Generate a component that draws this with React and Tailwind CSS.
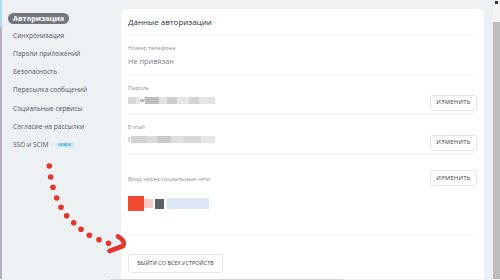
import React from 'react';

const navItems = [
  'Синхронизация',
  'Пароли приложений',
  'Безопасность',
  'Пересылка сообщений',
  'Социальные сервисы',
  'Согласие на рассылки',
];

const ChangeButton = () => (
  <button className="h-[16px] w-[47px] rounded-[3px] border border-[#e3e5e8] bg-white text-[6px] tracking-[0.2px] text-[#3a3f47]">
    ИЗМЕНИТЬ
  </button>
);

// blurred placeholder for hidden values
const Blur = ({ blocks }) => (
  <div className="flex items-center">
    {blocks.map(([w, c], i) => (
      <div key={i} className="h-[7px] blur-[0.6px]" style={{ width: w, background: c }} />
    ))}
  </div>
);

const Label = ({ children }) => (
  <div className="text-[5.8px] leading-[8px] text-[#8a8f96]">{children}</div>
);

const Arrow = () => (
  <svg className="pointer-events-none absolute left-0 top-0" width="500" height="280">
    {[
      [49.3, 166], [50.7, 177], [53, 187.3], [56.7, 198], [61, 207.3], [66.7, 215.7],
      [73.7, 222.7], [81, 229.3], [89.3, 235.3], [99, 239.7], [108.5, 243.3],
    ].map(([cx, cy], i) => (
      <circle key={i} cx={cx} cy={cy} r="2.8" fill="#e2352c" />
    ))}
    <path d="M118 236.5 Q126 241 123 246 L109.5 251" fill="none" stroke="#e2352c" strokeWidth="4.6" strokeLinecap="round" strokeLinejoin="round" />
  </svg>
);

export default function App() {
  return (
    <div className="relative h-[280px] w-[500px] overflow-hidden bg-[#eef1f4] font-['Open_Sans',sans-serif]">
      <div className="flex h-[279px]">
        {/* left edge */}
        <div className="flex w-[2px] flex-col">
          <div className="h-[27px] bg-[#a9dcef]" />
          <div className="flex-1 bg-[#b4b0bd]" />
        </div>

        {/* sidebar */}
        <div className="flex w-[119px] flex-col pl-[6px] pt-[13px]">
          <div className="flex h-[11px] w-fit items-center rounded-full bg-[#737780] px-[5px] text-[7.3px] font-bold leading-none text-white">
            Авторизация
          </div>
          <div className="mt-[3px] flex flex-col">
            {navItems.map((t) => (
              <div key={t} className="flex h-[18.2px] items-center pl-[5px] text-[6.6px] leading-none text-[#4f545c]">
                {t}
              </div>
            ))}
            <div className="flex h-[18.2px] items-center pl-[5px] text-[6.6px] leading-none text-[#4f545c]">
              SSO и SCIM
              <span className="ml-[6px] flex h-[5px] w-[20px] items-center justify-center rounded-full bg-[#d3eef9] text-[3.5px] font-bold text-[#3aa6d6]">
                НОВОК
              </span>
            </div>
          </div>
        </div>

        {/* card */}
        <div className="mt-[9px] w-[363px] rounded-t-[6px] bg-white px-[7px]">
          <div className="flex h-[27px] items-center border-b border-[#f1f2f4] text-[8px] text-[#2b2f36]">
            Данные авторизации
          </div>

          <div className="h-[40px] border-b border-[#f1f2f4] pt-[8px]">
            <Label>Номер телефона</Label>
            <div className="mt-[4px] text-[7.4px] leading-[10px] text-[#7b8087]">Не привязан</div>
          </div>

          <div className="flex h-[39px] items-start border-b border-[#f1f2f4] pt-[8px]">
            <div className="flex-1">
              <Label>Пароль</Label>
              <div className="mt-[4.5px] flex items-center">
                <Blur blocks={[[8, '#d8d8d8'], [4, '#e8e8e8']]} />
                <span className="text-[6px] leading-[7px] text-[#555]">w</span>
                <Blur blocks={[[14, '#bdbdbd'], [8, '#e2e2e2'], [10, '#cfcfcf'], [12, '#e6e6e6'], [10, '#d4d4d4'], [16, '#e4e4e4']]} />
              </div>
            </div>
            <div className="pt-[2px]"><ChangeButton /></div>
          </div>

          <div className="flex h-[40px] items-start border-b border-[#f1f2f4] pt-[8px]">
            <div className="flex-1">
              <Label>E-mail</Label>
              <div className="mt-[4.5px] flex items-center">
                <span className="mr-[1px] text-[6px] leading-[7px] text-[#555]">)</span>
                <Blur blocks={[[16, '#d2d2d2'], [10, '#dcdcdc'], [14, '#cacaca'], [12, '#e0e0e0'], [18, '#d8d8d8'], [14, '#e6e6e6']]} />
              </div>
            </div>
            <div className="pt-[3px]"><ChangeButton /></div>
          </div>

          <div className="flex h-[81px] items-start border-b border-[#f1f2f4] pt-[15px]">
            <div className="flex-1 pt-[5px]">
              <Label>Вход через социальные сети</Label>
              <div className="mt-[13px] flex items-center">
                <div className="h-[15px] w-[16px] bg-[#f04a35] blur-[0.6px]" />
                <div className="h-[9px] w-[9px] bg-[#f7c9c2] blur-[0.6px]" />
                <div className="ml-[2px] h-[10px] w-[9px] bg-[#5a5f68] blur-[0.6px]" />
                <div className="ml-[3px] h-[11px] w-[42px] bg-[#dce8f6] blur-[0.6px]" />
              </div>
            </div>
            <ChangeButton />
          </div>

          <div className="pt-[11px]">
            <button className="h-[19px] w-[95px] rounded-[3px] border border-[#e3e5e8] bg-white text-[5.5px] text-[#3a3f47]">
              ВЫЙТИ СО ВСЕХ УСТРОЙСТВ
            </button>
          </div>
        </div>

        {/* scrollbar */}
        <div className="ml-[9px] flex w-[7px] flex-col">
          <div className="relative h-[22px] bg-[#f3f4f6]">
            <div className="absolute left-[2px] top-[1px] h-[3px] w-[3px] bg-[#333]" />
          </div>
          <div className="flex-1 bg-[#bdbdbd]" />
        </div>
      </div>
      <div className="ml-[110px] h-[1px] w-[233px] bg-[#d0d2d5]" />
      <Arrow />
    </div>
  );
}
